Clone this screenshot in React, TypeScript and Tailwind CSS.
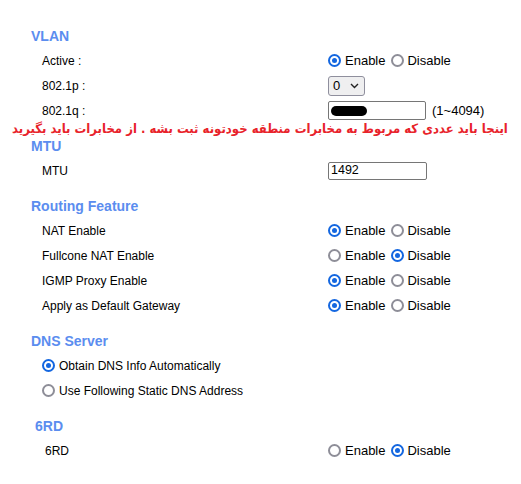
import React from "react";

function Radio({ checked }: { checked?: boolean }) {
  return checked ? (
    <span className="inline-flex h-[13px] w-[13px] shrink-0 items-center justify-center rounded-full border-2 border-[#1467e0] bg-white">
      <span className="h-[5px] w-[5px] rounded-full bg-[#1467e0]" />
    </span>
  ) : (
    <span className="inline-block h-[13px] w-[13px] shrink-0 rounded-full border-2 border-[#8e8e98] bg-white" />
  );
}

function EnDis({ enabled }: { enabled: boolean }) {
  return (
    <div className="flex items-center text-[13px]">
      <Radio checked={enabled} />
      <span className="ml-[4px]">Enable</span>
      <span className="ml-[6px]" />
      <Radio checked={!enabled} />
      <span className="ml-[3px]">Disable</span>
    </div>
  );
}

function Heading({ children, className = "" }: { children: React.ReactNode; className?: string }) {
  return (
    <div className={"flex h-[24px] items-center text-[14px] font-bold text-[#5b8def] " + className}>
      {children}
    </div>
  );
}

function Row({ label, children, indent = "pl-[11px]" }: { label: string; children?: React.ReactNode; indent?: string }) {
  return (
    <div className={"grid h-[25px] grid-cols-[286px_1fr] items-center " + indent}>
      <div>{label}</div>
      <div>{children}</div>
    </div>
  );
}

export default function App() {
  return (
    <div
      className="relative min-h-[484px] w-[521px] overflow-hidden bg-white pl-[31px] pt-[24px] text-[12px] text-black"
      style={{ fontFamily: '"Liberation Sans", Arial, sans-serif' }}
    >
      <section className="mb-[11px]">
        <Heading>VLAN</Heading>
        <Row label="Active :">
          <EnDis enabled />
        </Row>
        <Row label="802.1p :">
          <div className="flex h-[20px] w-[37px] items-center justify-between rounded-[3px] border border-[#8f8f9d] bg-[#efeff0] pl-[4px] pr-[5px]">
            <span className="text-[13px]">0</span>
            <svg width="9" height="6" viewBox="0 0 9 6">
              <path d="M1 1 L4.5 4.5 L8 1" fill="none" stroke="#222" strokeWidth="1.4" />
            </svg>
          </div>
        </Row>
        <Row label="802.1q :">
          <div className="flex items-center">
            <div className="flex h-[19px] w-[98px] items-center rounded-[2px] border border-[#767676] bg-white pl-[2px]">
              <span className="h-[10px] w-[36px] rounded-[5px] bg-black" />
            </div>
            <span className="ml-[6px] text-[13px]">(1~4094)</span>
          </div>
        </Row>
      </section>

      <section className="mb-[11px]">
        <Heading>MTU</Heading>
        <Row label="MTU">
          <div className="flex h-[18px] w-[99px] items-center rounded-[2px] border border-[#767676] bg-white pl-[2px] text-[12.5px]">
            1492
          </div>
        </Row>
      </section>

      <section className="mb-[11px]">
        <Heading>Routing Feature</Heading>
        <Row label="NAT Enable">
          <EnDis enabled />
        </Row>
        <Row label="Fullcone NAT Enable">
          <EnDis enabled={false} />
        </Row>
        <Row label="IGMP Proxy Enable">
          <EnDis enabled />
        </Row>
        <Row label="Apply as Default Gateway">
          <EnDis enabled />
        </Row>
      </section>

      <section className="mb-[11px]">
        <Heading>DNS Server</Heading>
        <div className="flex h-[25px] items-center pl-[11px]">
          <Radio checked />
          <span className="ml-[4px]">Obtain DNS Info Automatically</span>
        </div>
        <div className="flex h-[25px] items-center pl-[11px]">
          <Radio />
          <span className="ml-[4px]">Use Following Static DNS Address</span>
        </div>
      </section>

      <section>
        <Heading className="pl-[4px]">6RD</Heading>
        <Row label="6RD" indent="pl-[14px]">
          <div className="-ml-[3px]">
            <EnDis enabled={false} />
          </div>
        </Row>
      </section>

      <div
        dir="rtl"
        className="absolute right-[13px] top-[118px] origin-right scale-x-[0.9] whitespace-nowrap text-[13px] font-bold leading-[22px] text-[#e8232b]"
        style={{ fontFamily: '"DejaVu Sans", "Noto Sans", sans-serif' }}
      >
        اینجا باید عددی که مربوط به مخابرات منطقه خودتونه ثبت بشه . از مخابرات باید بگیرید
      </div>
    </div>
  );
}
